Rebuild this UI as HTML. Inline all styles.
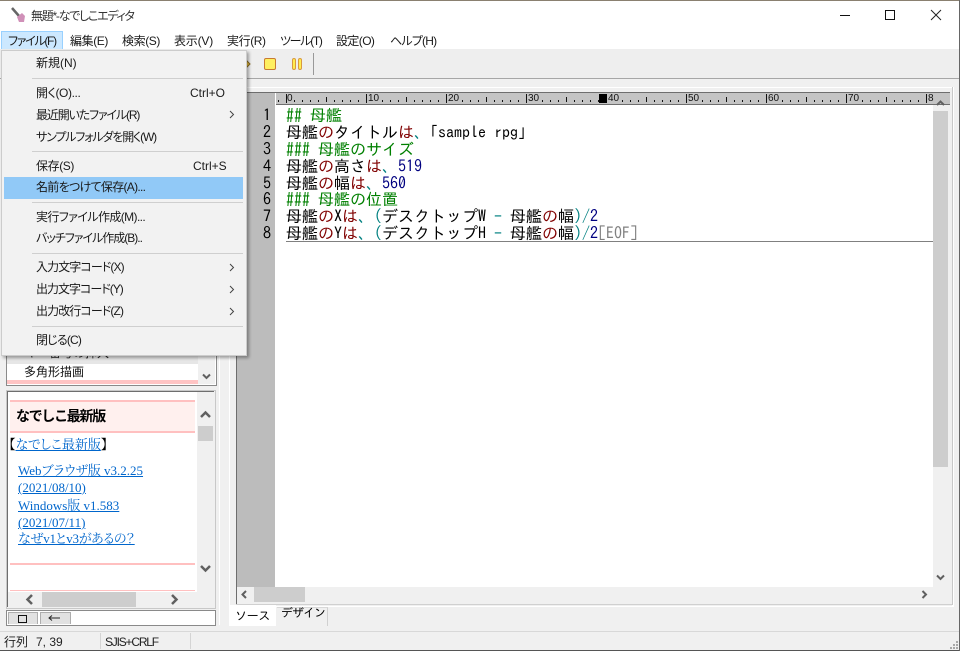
<!DOCTYPE html>
<html lang="ja"><head><meta charset="utf-8"><title>無題*-なでしこエディタ</title>
<style>
html,body{margin:0;padding:0}
body{width:960px;height:651px;overflow:hidden;position:relative;background:#f0f0f0;font-family:"Liberation Sans","Noto Sans CJK JP",sans-serif;color:#222}
div,span.a,a.a{position:absolute;white-space:pre}
.ui{font-size:12px;line-height:16px;height:16px;font-feature-settings:"palt";color:#1a1a1a}
.m{font-family:"IPAGothic",monospace;font-size:16px;line-height:17px;height:17px;left:286px;color:#000}
.n{font-family:"IPAGothic",monospace;font-size:16px;line-height:17px;height:17px;left:263px;color:#000}
.g{color:#008000}.r{color:#800000}.v{color:#000080}.c{color:#008080}.e{color:#808080}
.sep{left:32px;width:211px;height:1px;background:#cfcfcf}
.link{font-family:"Liberation Serif","Noto Serif CJK SC",serif;font-size:13px;line-height:16px;height:16px;color:#0066cc;text-decoration:underline;font-feature-settings:"palt"}
.rl{top:94px;font:10px/10px "Liberation Sans",sans-serif;color:#111}
svg{position:absolute;overflow:visible}
</style></head><body>

<!-- title + menu bar -->
<div style="left:0;top:0;width:960px;height:49px;background:#fff"></div>
<div style="left:0;top:0;width:960px;height:1px;background:#8a8070"></div>
<svg style="left:11px;top:7px" width="16" height="16"><path d="M1 1L8 9" stroke="#666" stroke-width="2.5"/><path d="M6 10l5-4 3 3-1 6-5 0z" fill="#d090b8"/></svg>
<div class="ui" style="left:31px;top:8px;color:#333;letter-spacing:-1.25px">無題*-なでしこエディタ</div>
<div style="left:840px;top:15px;width:10px;height:1px;background:#111"></div>
<div style="left:885px;top:10px;width:8px;height:8px;border:1px solid #111"></div>
<svg style="left:930px;top:9px" width="12" height="12"><path d="M1 1L11 11M11 1L1 11" stroke="#222" stroke-width="1"/></svg>
<div style="left:1px;top:31px;width:60px;height:17px;background:#cce8ff;border:1px solid #99d1ff"></div>
<div class="ui" style="left:8px;top:33px;letter-spacing:-1.3px">ファイル(F)</div>
<div class="ui" style="left:70px;top:33px;letter-spacing:-.4px">編集(E)</div>
<div class="ui" style="left:122px;top:33px;letter-spacing:-.4px">検索(S)</div>
<div class="ui" style="left:174px;top:33px;letter-spacing:-.2px">表示(V)</div>
<div class="ui" style="left:227px;top:33px;letter-spacing:-.4px">実行(R)</div>
<div class="ui" style="left:280px;top:33px;letter-spacing:-1.3px">ツール(T)</div>
<div class="ui" style="left:336px;top:33px;letter-spacing:-.6px">設定(O)</div>
<div class="ui" style="left:390px;top:33px;letter-spacing:-.8px">ヘルプ(H)</div>

<!-- toolbar -->
<div style="left:0;top:49px;width:960px;height:29px;background:#eeeeee"></div>
<svg style="left:246px;top:58px" width="6" height="12"><path d="M0 2L4 6L0 10Z" fill="#e8c040" stroke="#8a6a20"/></svg>
<div style="left:264px;top:58px;width:10px;height:10px;background:#ffef60;border:1px solid #c87a30;border-radius:2px"></div>
<div style="left:292px;top:58px;width:2px;height:10px;background:#ffee50;border:1px solid #d89a40;border-radius:2px"></div>
<div style="left:298px;top:58px;width:2px;height:10px;background:#ffee50;border:1px solid #d89a40;border-radius:2px"></div>
<div style="left:313px;top:53px;width:1px;height:22px;background:#999"></div>
<div style="left:0;top:78px;width:960px;height:1px;background:#a6a6a6"></div>

<!-- editor panel -->
<div style="left:229px;top:87px;width:722px;height:518px;border:1px solid #fff;border-right:2px solid #fff;background:#f0f0f0"></div>
<div style="left:236px;top:92px;width:714px;height:1px;background:#6e6e6e"></div>
<div style="left:236px;top:93px;width:1px;height:511px;background:#6e6e6e"></div>
<div style="left:237px;top:93px;width:38px;height:494px;background:#bcbcbc"></div>
<div style="left:275px;top:93px;width:675px;height:11px;background:#c4c4c4"></div>
<div style="left:275px;top:104px;width:675px;height:1px;background:#6e6e6e"></div>
<div style="left:275px;top:105px;width:658px;height:482px;background:#fff"></div>
<div style="left:275px;top:93px;width:1px;height:494px;background:#fff"></div>
<svg style="left:275px;top:93px" width="660" height="11"><defs><pattern id="rt" x="11" y="0" width="80" height="11" patternUnits="userSpaceOnUse"><rect x="0" y="1" width="1" height="9" fill="#111"/><rect x="8" y="7" width="1" height="2" fill="#111"/><rect x="16" y="7" width="1" height="2" fill="#111"/><rect x="24" y="7" width="1" height="2" fill="#111"/><rect x="32" y="7" width="1" height="2" fill="#111"/><rect x="40" y="4" width="1" height="5" fill="#111"/><rect x="48" y="7" width="1" height="2" fill="#111"/><rect x="56" y="7" width="1" height="2" fill="#111"/><rect x="64" y="7" width="1" height="2" fill="#111"/><rect x="72" y="7" width="1" height="2" fill="#111"/></pattern></defs><rect x="0" y="0" width="658" height="11" fill="url(#rt)"/></svg>
<div style="left:599px;top:94px;width:8px;height:9px;background:#000"></div>
<div class="rl" style="left:287px;width:7px;background:#c4c4c4">0</div>
<div class="rl" style="left:368px;background:#c4c4c4">10</div>
<div class="rl" style="left:448px;background:#c4c4c4">20</div>
<div class="rl" style="left:528px;background:#c4c4c4">30</div>
<div class="rl" style="left:608px;background:#c4c4c4">40</div>
<div class="rl" style="left:688px;background:#c4c4c4">50</div>
<div class="rl" style="left:768px;background:#c4c4c4">60</div>
<div class="rl" style="left:848px;background:#c4c4c4">70</div>
<div class="rl" style="left:928px;background:#c4c4c4">8</div>

<div class="n" style="top:107px">1</div><div class="n" style="top:124px">2</div><div class="n" style="top:141px">3</div><div class="n" style="top:158px">4</div><div class="n" style="top:175px">5</div><div class="n" style="top:191px">6</div><div class="n" style="top:208px">7</div><div class="n" style="top:225px">8</div>
<div class="m g" style="top:107px">## 母艦</div>
<div class="m" style="top:124px">母艦<span class="r">の</span>タイトル<span class="r">は</span><span class="c">、</span>｢sample rpg｣</div>
<div class="m g" style="top:141px">### 母艦のサイズ</div>
<div class="m" style="top:158px">母艦<span class="r">の</span>高さ<span class="r">は</span><span class="c">、</span><span class="v">519</span></div>
<div class="m" style="top:175px">母艦<span class="r">の</span>幅<span class="r">は</span><span class="c">、</span><span class="v">560</span></div>
<div class="m g" style="top:191px">### 母艦の位置</div>
<div class="m" style="top:208px">母艦<span class="r">の</span>X<span class="r">は</span><span class="c">、(</span>デスクトップW <span class="c">-</span> 母艦<span class="r">の</span>幅<span class="c">)/</span><span class="v">2</span></div>
<div class="m" style="top:225px">母艦<span class="r">の</span>Y<span class="r">は</span><span class="c">、(</span>デスクトップH <span class="c">-</span> 母艦<span class="r">の</span>幅<span class="c">)/</span><span class="v">2</span><span class="e">[EOF]</span></div>
<div style="left:286px;top:241px;width:647px;height:1px;background:#808080"></div>

<!-- editor scrollbars -->
<div style="left:933px;top:105px;width:17px;height:482px;background:#f0f0f0"></div>
<div style="left:933px;top:111px;width:15px;height:356px;background:#cdcdcd"></div>
<svg style="left:936px;top:100px" width="10" height="7"><path d="M1 5L4.5 1.5L8 5" fill="none" stroke="#606060" stroke-width="2"/></svg>
<svg style="left:936px;top:574px" width="10" height="7"><path d="M1 1.5L4.5 5L8 1.5" fill="none" stroke="#606060" stroke-width="2"/></svg>
<div style="left:237px;top:587px;width:713px;height:17px;background:#f0f0f0"></div>
<div style="left:254px;top:587px;width:51px;height:15px;background:#cdcdcd"></div>
<svg style="left:241px;top:590px" width="7" height="10"><path d="M5 1L1.5 4.5L5 8" fill="none" stroke="#606060" stroke-width="2"/></svg>
<svg style="left:921px;top:590px" width="7" height="10"><path d="M1.5 1L5 4.5L1.5 8" fill="none" stroke="#606060" stroke-width="2"/></svg>
<div style="left:236px;top:604px;width:717px;height:1px;background:#d0d0d0"></div>
<div style="left:952px;top:87px;width:1px;height:518px;background:#c8c8c8"></div>

<!-- tabs -->
<div style="left:229px;top:605px;width:47px;height:21px;background:#fff"></div>
<div class="m" style="left:235px;top:608px;font-size:12px;letter-spacing:-.3px">ソース</div>
<div style="left:277px;top:607px;width:50px;height:18px;border-right:1px solid #d0d0d0;border-top:1px solid #d8d8d8"></div>
<div class="m" style="left:281px;top:605px;font-size:12px;letter-spacing:-1px">デザイン</div>
<div style="left:229px;top:631px;width:731px;height:1px;background:#d8d8d8"></div>

<!-- left panels -->
<div style="left:0;top:631px;width:960px;height:1px;background:#d8d8d8"></div>
<div style="left:219px;top:345px;width:1px;height:280px;background:#fff"></div>
<div style="left:6px;top:340px;width:209px;height:44px;background:#fff;border:1px solid #8a8a8a"></div>
<div style="left:7px;top:354px;width:191px;height:10px;background:#e6e6e6;overflow:hidden"><span class="a" style="left:18px;top:-9px;font-size:12px;line-height:16px">キー番号の挿入</span></div>
<div class="ui" style="left:24px;top:364px;color:#111">多角形描画</div>
<div style="left:7px;top:380px;width:191px;height:4px;background:#ffc4c4"></div>
<div style="left:198px;top:341px;width:17px;height:43px;background:#f0f0f0"></div>
<svg style="left:202px;top:373px" width="10" height="7"><path d="M1 1.5L4.5 5L8 1.5" fill="none" stroke="#606060" stroke-width="2"/></svg>

<div style="left:6px;top:390px;width:208px;height:217px;background:#f0f0f0;border:1px solid #c8c8c8"></div>
<div style="left:7px;top:391px;width:207px;height:1px;background:#6e6e6e"></div>
<div style="left:7px;top:391px;width:1px;height:216px;background:#6e6e6e"></div>
<div style="left:8px;top:392px;width:189px;height:200px;background:#fff"></div>
<div style="left:10px;top:400px;width:185px;height:33px;background:#fff0ee;border-top:2px solid #ffc0c0;border-bottom:2px solid #ffc0c0;box-sizing:border-box"></div>
<div style="left:16px;top:407px;font-size:14px;font-weight:bold;line-height:18px;color:#000;letter-spacing:-1.3px">なでしこ最新版</div>
<div style="left:9px;top:437px;font-family:'Liberation Serif','Noto Serif CJK SC',serif;font-size:13px;line-height:16px;color:#000;font-feature-settings:'palt'">【<span style="color:#0066cc;text-decoration:underline">なでしこ最新版</span>】</div>
<div class="link" style="left:18px;top:463px">Webブラウザ版 v3.2.25</div>
<div class="link" style="left:18px;top:480px">(2021/08/10)</div>
<div class="link" style="left:18px;top:498px">Windows版 v1.583</div>
<div class="link" style="left:18px;top:515px">(2021/07/11)</div>
<div class="link" style="left:18px;top:531px;letter-spacing:-.3px">なぜv1とv3があるの？</div>
<div style="left:10px;top:563px;width:185px;height:2px;background:#ffc0c0"></div>
<div style="left:10px;top:590px;width:185px;height:1px;background:#ffc0c0"></div>
<svg style="left:199px;top:408px" width="14" height="12"><path d="M2 9L6.5 4.5L11 9" fill="none" stroke="#606060" stroke-width="2.5"/></svg>
<div style="left:198px;top:426px;width:15px;height:15px;background:#cdcdcd"></div>
<svg style="left:199px;top:564px" width="14" height="12"><path d="M2 2L6.5 6.5L11 2" fill="none" stroke="#606060" stroke-width="2.5"/></svg>
<div style="left:42px;top:592px;width:94px;height:15px;background:#cdcdcd"></div>
<svg style="left:24px;top:593px" width="12" height="14"><path d="M8 2L3.5 6.5L8 11" fill="none" stroke="#606060" stroke-width="2.5"/></svg>
<svg style="left:169px;top:593px" width="12" height="14"><path d="M3 2L7.5 6.5L3 11" fill="none" stroke="#606060" stroke-width="2.5"/></svg>

<div style="left:6px;top:610px;width:208px;height:14px;background:#fff;border:1px solid #8a8a8a"></div>
<div style="left:8px;top:612px;width:30px;height:12px;background:#e1e1e1;border:1px solid #adadad;box-sizing:border-box;border-bottom:0"></div>
<div style="left:18px;top:615px;width:7px;height:6px;border:1px solid #111"></div>
<div style="left:40px;top:612px;width:31px;height:12px;background:#e1e1e1;border:1px solid #adadad;box-sizing:border-box;border-bottom:0"></div>
<svg style="left:48px;top:613px" width="14" height="10"><path d="M1 5H12M4 2.5L1 5L4 7.5" fill="none" stroke="#222"/></svg>

<!-- status bar -->
<div class="ui" style="left:4px;top:634px;color:#222;font-size:12px">行列</div>
<div class="ui" style="left:36px;top:634px;color:#222">7, 39</div>
<div style="left:100px;top:633px;width:1px;height:16px;background:#d4d4d4"></div>
<div class="ui" style="left:105px;top:634px;color:#222;letter-spacing:-1.2px">SJIS+CRLF</div>
<div style="left:190px;top:633px;width:1px;height:16px;background:#d4d4d4"></div>
<div style="left:0;top:650px;width:960px;height:1px;background:#555"></div>
<div style="left:959px;top:0;width:1px;height:651px;background:#666"></div>
<div style="left:956px;top:641px;width:2px;height:2px;background:#a8a8a8"></div>
<div style="left:953px;top:644px;width:2px;height:2px;background:#a8a8a8"></div>
<div style="left:956px;top:644px;width:2px;height:2px;background:#a8a8a8"></div>
<div style="left:950px;top:647px;width:2px;height:2px;background:#a8a8a8"></div>
<div style="left:953px;top:647px;width:2px;height:2px;background:#a8a8a8"></div>
<div style="left:956px;top:647px;width:2px;height:2px;background:#a8a8a8"></div>

<!-- popup menu -->
<div style="left:1px;top:50px;width:244px;height:304px;background:#f2f2f2;border:1px solid #cccccc;box-shadow:2px 2px 3px rgba(0,0,0,.35)"></div>
<div class="sep" style="top:78px"></div><div class="sep" style="top:151px"></div><div class="sep" style="top:202px"></div><div class="sep" style="top:253px"></div><div class="sep" style="top:326px"></div>
<div style="left:4px;top:177px;width:239px;height:22px;background:#91c9f7"></div>
<div class="ui" style="left:36px;top:55px">新規(N)</div>
<div class="ui" style="left:36px;top:85px;letter-spacing:-.4px">開く(O)...</div>
<div class="ui" style="left:190px;top:85px">Ctrl+O</div>
<div class="ui" style="left:36px;top:107px;letter-spacing:-1.15px">最近開いたファイル(R)</div>
<div class="ui" style="left:36px;top:129px;letter-spacing:-1.15px">サンプルフォルダを開く(W)</div>
<div class="ui" style="left:36px;top:158px;letter-spacing:-.4px">保存(S)</div>
<div class="ui" style="left:193px;top:158px">Ctrl+S</div>
<div class="ui" style="left:36px;top:179px;letter-spacing:-.7px">名前をつけて保存(A)...</div>
<div class="ui" style="left:36px;top:209px;letter-spacing:-.6px">実行ファイル作成(M)...</div>
<div class="ui" style="left:36px;top:230px;letter-spacing:-1px">バッチファイル作成(B)..</div>
<div class="ui" style="left:36px;top:259px;letter-spacing:-.9px">入力文字コード(X)</div>
<div class="ui" style="left:36px;top:281px;letter-spacing:-1px">出力文字コード(Y)</div>
<div class="ui" style="left:36px;top:303px;letter-spacing:-.9px">出力改行コード(Z)</div>
<div class="ui" style="left:36px;top:332px;letter-spacing:-.8px">閉じる(C)</div>
<svg style="left:229px;top:110px" width="6" height="10"><path d="M1 1L4.5 4.5L1 8" fill="none" stroke="#444" stroke-width="1"/></svg>
<svg style="left:229px;top:263px" width="6" height="10"><path d="M1 1L4.5 4.5L1 8" fill="none" stroke="#444" stroke-width="1"/></svg>
<svg style="left:229px;top:285px" width="6" height="10"><path d="M1 1L4.5 4.5L1 8" fill="none" stroke="#444" stroke-width="1"/></svg>
<svg style="left:229px;top:307px" width="6" height="10"><path d="M1 1L4.5 4.5L1 8" fill="none" stroke="#444" stroke-width="1"/></svg>
</body></html>
